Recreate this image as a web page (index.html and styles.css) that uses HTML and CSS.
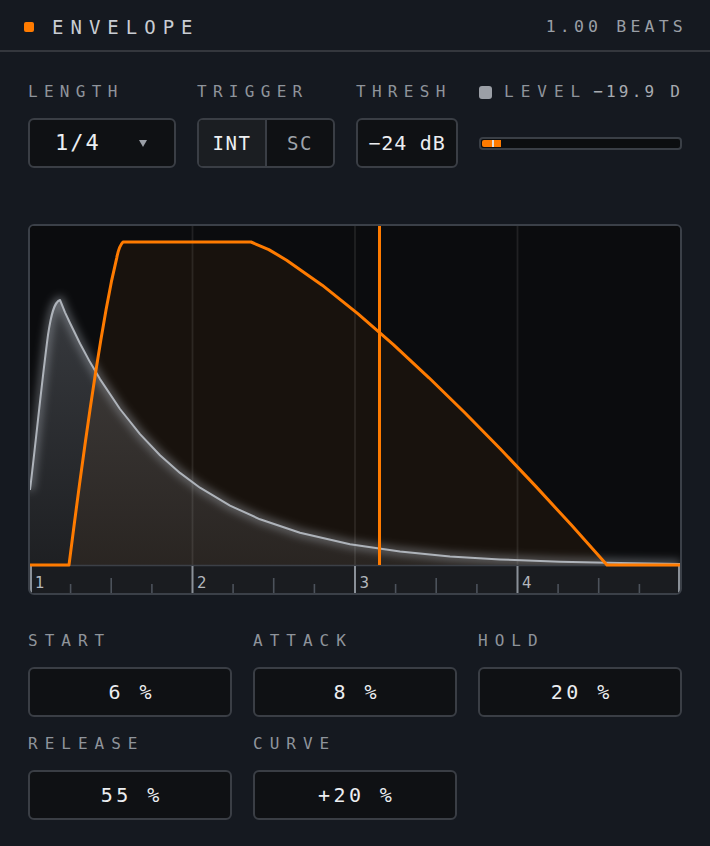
FILE: index.html
```html
<!DOCTYPE html>
<html>
<head>
<meta charset="utf-8">
<title>Envelope</title>
<link rel="stylesheet" href="styles.css">
</head>
<body>
<div class="panel">
  <header class="header">
    <div class="title"><span class="title-dot"></span><span class="title-text">ENVELOPE</span></div>
    <div class="beats">1.00 BEATS</div>
  </header>

  <section class="controls">
    <div class="ctl ctl-length">
      <div class="label">LENGTH</div>
      <div class="box select"><span class="val val-lg">1/4</span><span class="caret"></span></div>
    </div>
    <div class="ctl ctl-trigger">
      <div class="label">TRIGGER</div>
      <div class="box seg"><span class="seg-item active">INT</span><span class="seg-item">SC</span></div>
    </div>
    <div class="ctl ctl-thresh">
      <div class="label">THRESH</div>
      <div class="box center"><span class="val val-md">−24 dB</span></div>
    </div>
    <div class="ctl ctl-level">
      <div class="label level-label"><span class="level-dot"></span><span class="level-name">LEVEL</span><span class="level-val">−19.9 DB</span></div>
      <div class="meter-row">
        <div class="meter">
          <div class="meter-fill" style="width:19px"></div>
          <div class="meter-peak" style="left:11px"></div>
        </div>
      </div>
    </div>
  </section>

  <div class="graph">
    <svg class="graph-svg" width="650" height="367" viewBox="30 226 650 367" xmlns="http://www.w3.org/2000/svg">
      <defs>
        <linearGradient id="grayFill" x1="0" y1="300" x2="0" y2="565" gradientUnits="userSpaceOnUse">
          <stop offset="0" stop-color="#aab0ba" stop-opacity="0.28"/>
          <stop offset="1" stop-color="#aab0ba" stop-opacity="0.12"/>
        </linearGradient>
        <filter id="glow" x="-10%" y="-10%" width="120%" height="120%">
          <feGaussianBlur stdDeviation="4"/>
        </filter>
      </defs>
      <rect x="30" y="226" width="650" height="340" fill="#0b0c0e"/>

      <!-- envelope fill -->
      <path fill="#ff7b00" fill-opacity="0.055" d="M30 565 L69 565 L74.3 523.7 L79.6 483.6 L84.9 445.2 L90.2 408.3 L95.5 373.1 L100.8 340.2 L106.1 309.5 L111.4 281.7 L116.7 258.1 Q119 246 123 242 L251 242 L268.8 249.6 L286.6 260.2 L322.2 285.2 L357.8 313.7 L393.4 344.7 L429 377.8 L464.6 412.5 L500.2 448.8 L535.8 486.4 L571.4 525.1 L607 565 L680 565 Z"/>

      <!-- signal fill -->
      <path fill="url(#grayFill)" d="M30 490 C36 440 42 380 48 335 C51 315 54 302 60 300 L65 312.3 L70 323 L80 343.5 L90 362.1 L100 379.1 L120 409 L140 434.1 L160 455.2 L180 472.9 L200 487.7 L230 505.6 L260 519.3 L300 532.8 L350 544.2 L400 551.6 L450 556.4 L500 559.4 L560 561.7 L620 563.1 L680 563.9 L680 565 L30 565 Z"/>

      <!-- grid -->
      <g stroke="#ffffff" stroke-opacity="0.09" stroke-width="1.8">
        <line x1="192.5" y1="226" x2="192.5" y2="565"/>
        <line x1="355" y1="226" x2="355" y2="565"/>
        <line x1="517.5" y1="226" x2="517.5" y2="565"/>
      </g>

      <!-- signal line with glow -->
      <path filter="url(#glow)" fill="none" stroke="#a9afb8" stroke-opacity="0.5" stroke-width="7" d="M30 490 C36 440 42 380 48 335 C51 315 54 302 60 300 L65 312.3 L70 323 L80 343.5 L90 362.1 L100 379.1 L120 409 L140 434.1 L160 455.2 L180 472.9 L200 487.7 L230 505.6 L260 519.3 L300 532.8 L350 544.2 L400 551.6 L450 556.4 L500 559.4 L560 561.7 L620 563.1 L680 563.9"/>
      <path fill="none" stroke="#aeb3ba" stroke-width="2" stroke-linejoin="round" d="M30 490 C36 440 42 380 48 335 C51 315 54 302 60 300 L65 312.3 L70 323 L80 343.5 L90 362.1 L100 379.1 L120 409 L140 434.1 L160 455.2 L180 472.9 L200 487.7 L230 505.6 L260 519.3 L300 532.8 L350 544.2 L400 551.6 L450 556.4 L500 559.4 L560 561.7 L620 563.1 L680 563.9"/>

      <!-- ruler -->
      <rect x="30" y="566" width="650" height="27" fill="#1a1c20"/>
      <line x1="30" y1="565.5" x2="680" y2="565.5" stroke="#3c4047" stroke-width="1.5"/>
      <g stroke="#4c525b" stroke-width="1.6">
        <line x1="70.6" y1="584" x2="70.6" y2="593"/>
        <line x1="111.2" y1="578" x2="111.2" y2="593"/>
        <line x1="151.9" y1="584" x2="151.9" y2="593"/>
        <line x1="233.1" y1="584" x2="233.1" y2="593"/>
        <line x1="273.7" y1="578" x2="273.7" y2="593"/>
        <line x1="314.4" y1="584" x2="314.4" y2="593"/>
        <line x1="395.6" y1="584" x2="395.6" y2="593"/>
        <line x1="436.2" y1="578" x2="436.2" y2="593"/>
        <line x1="476.9" y1="584" x2="476.9" y2="593"/>
        <line x1="558.1" y1="584" x2="558.1" y2="593"/>
        <line x1="598.7" y1="578" x2="598.7" y2="593"/>
        <line x1="639.4" y1="584" x2="639.4" y2="593"/>
      </g>
      <g stroke="#8a9098" stroke-width="2">
        <line x1="31" y1="566" x2="31" y2="593"/>
        <line x1="192.5" y1="566" x2="192.5" y2="593"/>
        <line x1="355" y1="566" x2="355" y2="593"/>
        <line x1="517.5" y1="566" x2="517.5" y2="593"/>
        <line x1="679" y1="566" x2="679" y2="593"/>
      </g>
      <g class="ruler-num">
        <text x="35" y="588">1</text>
        <text x="197" y="588">2</text>
        <text x="359.5" y="588">3</text>
        <text x="522" y="588">4</text>
      </g>

      <!-- envelope line -->
      <path fill="none" stroke="#ff7b00" stroke-width="3" stroke-linejoin="round" d="M30 565 L69 565 L74.3 523.7 L79.6 483.6 L84.9 445.2 L90.2 408.3 L95.5 373.1 L100.8 340.2 L106.1 309.5 L111.4 281.7 L116.7 258.1 Q119 246 123 242 L251 242 L268.8 249.6 L286.6 260.2 L322.2 285.2 L357.8 313.7 L393.4 344.7 L429 377.8 L464.6 412.5 L500.2 448.8 L535.8 486.4 L571.4 525.1 L607 565 L681 565"/>

      <!-- playhead -->
      <line x1="379.5" y1="226" x2="379.5" y2="565" stroke="#ff7b00" stroke-width="3"/>
    </svg>
  </div>

  <section class="params">
    <div class="param">
      <div class="label plabel">START</div>
      <div class="box center"><span class="val val-sp">6 %</span></div>
    </div>
    <div class="param">
      <div class="label plabel">ATTACK</div>
      <div class="box center"><span class="val val-sp">8 %</span></div>
    </div>
    <div class="param">
      <div class="label plabel">HOLD</div>
      <div class="box center"><span class="val val-sp">20 %</span></div>
    </div>
    <div class="param">
      <div class="label plabel">RELEASE</div>
      <div class="box center"><span class="val val-sp">55 %</span></div>
    </div>
    <div class="param">
      <div class="label plabel">CURVE</div>
      <div class="box center"><span class="val val-sp">+20 %</span></div>
    </div>
  </section>
</div>
</body>
</html>
```

FILE: styles.css
```css
* { box-sizing: border-box; }

body {
  margin: 0;
  background: #151920;
  font-family: "DejaVu Sans Mono", "Liberation Mono", monospace;
}

.panel {
  width: 710px;
  height: 846px;
  overflow: hidden;
  background: #151920;
}

/* header */
.header {
  display: flex;
  align-items: center;
  justify-content: space-between;
  height: 52px;
  padding: 3px 23px 0 24px;
  border-bottom: 2px solid #34373d;
}

.title {
  display: flex;
  align-items: center;
}

.title-dot {
  width: 10px;
  height: 10px;
  border-radius: 2px;
  background: #ff7b00;
  margin-right: 18px;
}

.title-text {
  font-size: 19px;
  letter-spacing: 7px;
  color: #c9cdd3;
  line-height: 20px;
}

.beats {
  font-size: 16.5px;
  letter-spacing: 4.2px;
  color: #9a9fa6;
  line-height: 20px;
}

/* labels */
.label {
  font-size: 16px;
  line-height: 16px;
  letter-spacing: 6.3px;
  color: #8f949b;
  white-space: nowrap;
  height: 16px;
  margin-bottom: 18px;
}

.plabel {
  letter-spacing: 7px;
}

/* controls row */
.controls {
  display: flex;
  gap: 21px;
  padding: 32px 28px 0 28px;
}

.ctl-length { width: 148px; }
.ctl-trigger { width: 138px; }
.ctl-thresh { width: 102px; }
.ctl-level { flex: 1; min-width: 0; }

.box {
  height: 50px;
  border: 2px solid #3a3e45;
  border-radius: 6px;
  background: #0f1114;
  display: flex;
  align-items: center;
  color: #eceef1;
}

.center { justify-content: center; }

.val {
  white-space: nowrap;
  line-height: 20px;
}

.val-lg {
  font-size: 22px;
  letter-spacing: 2px;
}

.val-md {
  font-size: 20px;
  letter-spacing: 0.8px;
}

.val-sp {
  font-size: 20px;
  letter-spacing: 3.4px;
  margin-right: -3.4px;
}

.select {
  justify-content: space-between;
  padding: 0 27px 0 25px;
}

.caret {
  width: 0;
  height: 0;
  border-left: 4px solid transparent;
  border-right: 4px solid transparent;
  border-top: 7px solid #9ba0a8;
  margin-top: 1px;
}

.seg {
  overflow: hidden;
}

.seg-item {
  flex: 1;
  height: 100%;
  display: flex;
  align-items: center;
  justify-content: center;
  font-size: 19px;
  letter-spacing: 1.5px;
  color: #9ea3aa;
}

.seg-item.active {
  background: #1b1e22;
  color: #eef0f2;
  border-right: 2px solid #3a3e45;
}

/* level */
.level-label {
  display: flex;
  align-items: center;
  overflow: hidden;
  letter-spacing: 0;
}

.level-dot {
  flex: none;
  width: 13px;
  height: 13px;
  border-radius: 3px;
  background: #9b9fa6;
  margin-right: 12px;
}

.level-name {
  letter-spacing: 7px;
}

.level-val {
  margin-left: 6px;
  letter-spacing: 3.2px;
  color: #a7abb1;
}

.meter-row {
  height: 50px;
  display: flex;
  align-items: center;
}

.meter {
  position: relative;
  width: 100%;
  height: 13px;
  border: 2px solid #3a3f46;
  border-radius: 4px;
  background: #0c0e10;
  overflow: hidden;
}

.meter-fill {
  position: absolute;
  left: 1px;
  top: 1px;
  bottom: 1px;
  background: #ff7b00;
  border-radius: 2px 0 0 2px;
}

.meter-peak {
  position: absolute;
  top: 1px;
  bottom: 1px;
  width: 2px;
  background: #e2ddd8;
}

/* graph */
.graph {
  margin: 56px 28px 0 28px;
  width: 654px;
  height: 371px;
  border: 2px solid #3b4048;
  border-radius: 6px;
  background: #0b0c0e;
  overflow: hidden;
}

.graph-svg {
  display: block;
}

.ruler-num text {
  font-family: "DejaVu Sans", sans-serif;
  font-size: 15px;
  fill: #b3b7bd;
}

/* params */
.params {
  display: grid;
  grid-template-columns: repeat(3, 1fr);
  column-gap: 21px;
  row-gap: 19px;
  padding: 38px 28px 0 28px;
}
```
